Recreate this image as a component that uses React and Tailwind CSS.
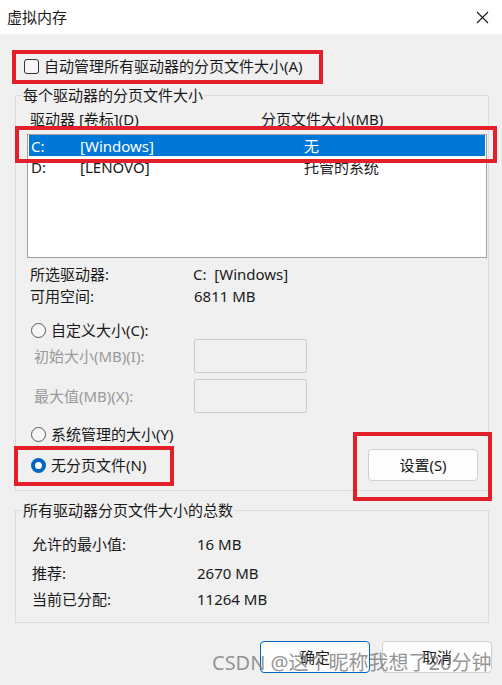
import React from 'react';

const font = "font-['Noto_Sans','Noto_Sans_CJK_SC',sans-serif]";

function Radio({ checked, label }) {
    return (
        <div className="flex items-center gap-[5px]">
            {checked ? (
                <span className="w-[15px] h-[15px] rounded-full bg-[#0067c0] flex items-center justify-center">
                    <span className="w-[7px] h-[7px] rounded-full bg-white" />
                </span>
            ) : (
                <span className="w-[15px] h-[15px] rounded-full border border-[#5a5a5a] bg-[#f7f7f7]" />
            )}
            <span>{label}</span>
        </div>
    );
}

function Button({ children, primary }) {
    return (
        <button
            className={
                primary
                    ? 'w-[110px] h-[32px] rounded-[4px] border border-[#0067c0] bg-[#fdfdfd] text-[15px] text-[#1a1a1a]'
                    : 'w-[110px] h-[32px] rounded-[4px] border border-[#d0d0d0] bg-[#fdfdfd] text-[15px] text-[#1a1a1a]'
            }
        >
            {children}
        </button>
    );
}

export default function App() {
    const drives = [
        { letter: 'C:', label: '[Windows]', size: '无', selected: true },
        { letter: 'D:', label: '[LENOVO]', size: '托管的系统', selected: false },
    ];

    const totals = [
        ['允许的最小值:', '16 MB', 'mt-[13px]'],
        ['推荐:', '2670 MB', 'mt-[7px]'],
        ['当前已分配:', '11264 MB', 'mt-[4px]'],
    ];

    return (
        <div className={`relative w-[502px] h-[685px] overflow-hidden bg-[#f0f0f0] text-[15px] leading-[20px] text-[#1a1a1a] ${font}`}>
            {/* Title bar */}
            <div className="h-[34px] bg-white flex items-center justify-between pl-[7px] pr-[13px]">
                <span>虚拟内存</span>
                <svg width="13" height="13" viewBox="0 0 13 13" stroke="#1a1a1a" strokeWidth="1.1">
                    <path d="M1 1 L12 12 M12 1 L1 12" />
                </svg>
            </div>

            {/* Auto manage checkbox */}
            <div className="mt-[22px] pl-[24px] flex items-center gap-[5px] h-[20px]">
                <span className="w-[15px] h-[15px] rounded-[3px] border border-[#333] bg-[#f7f7f7]" />
                <span>自动管理所有驱动器的分页文件大小(A)</span>
            </div>

            {/* Per drive group */}
            <fieldset className="mt-[9px] ml-[15px] w-[474px] border border-[#dcdcdc] pb-[9px]">
                <legend className="ml-[6px] px-[1px] leading-[20px]">每个驱动器的分页文件大小</legend>

                <div className="mt-[4px] h-[20px] flex pl-[14px]">
                    <span className="w-[231px]">驱动器 [卷标](D)</span>
                    <span>分页文件大小(MB)</span>
                </div>

                <div className="mt-[5px] ml-[11px] w-[460px] h-[124px] border border-[#a0a0a0] bg-white px-[1px]">
                    {drives.map((d) => (
                        <div
                            key={d.letter}
                            className={
                                d.selected
                                    ? 'h-[21px] flex items-center pl-[2px] bg-[#0078d7] text-white'
                                    : 'h-[21px] flex items-center pl-[2px]'
                            }
                        >
                            <span className="w-[49px]">{d.letter}</span>
                            <span className="w-[224px]">{d.label}</span>
                            <span>{d.size}</span>
                        </div>
                    ))}
                </div>

                <div className="mt-[5px] pl-[14px]">
                    <div className="h-[22px] flex items-center">
                        <span className="w-[163px]">所选驱动器:</span>
                        <span>C:&nbsp;&nbsp;[Windows]</span>
                    </div>
                    <div className="h-[22px] flex items-center">
                        <span className="w-[164px]">可用空间:</span>
                        <span>6811 MB</span>
                    </div>
                </div>

                <div className="mt-[14px] pl-[15px] h-[18px] flex items-center">
                    <Radio label="自定义大小(C):" />
                </div>

                <div className="h-[34px] flex items-center pl-[18px] text-[#9a9a9a]">
                    <span className="w-[160px]">初始大小(MB)(I):</span>
                    <span className="w-[113px] h-[34px] border border-[#cccccc] rounded-[2px]" />
                </div>
                <div className="mt-[6px] h-[34px] flex items-center pl-[18px] text-[#9a9a9a]">
                    <span className="w-[160px]">最大值(MB)(X):</span>
                    <span className="w-[113px] h-[34px] border border-[#cccccc] rounded-[2px]" />
                </div>

                <div className="mt-[11px] pl-[15px] h-[20px] flex items-center">
                    <Radio label="系统管理的大小(Y)" />
                </div>

                <div className="mt-[5px] pl-[15px] pr-[10px] h-[32px] flex items-center justify-between">
                    <Radio checked label="无分页文件(N)" />
                    <Button>设置(S)</Button>
                </div>
            </fieldset>

            {/* Totals group */}
            <fieldset className="mt-[9px] ml-[15px] w-[474px] border border-[#dcdcdc] pb-[12px]">
                <legend className="ml-[6px] px-[1px] leading-[20px]">所有驱动器分页文件大小的总数</legend>
                {totals.map(([label, value, gap]) => (
                    <div key={label} className={`${gap} pl-[16px] h-[22px] flex items-center`}>
                        <span className="w-[165px]">{label}</span>
                        <span>{value}</span>
                    </div>
                ))}
            </fieldset>

            <div className="mt-[18px] pr-[10px] flex justify-end gap-[12px]">
                <Button primary>确定</Button>
                <Button>取消</Button>
            </div>

            {/* Annotation boxes */}
            <div className="absolute left-[12px] top-[50px] w-[311px] h-[34px] border-4 border-[#e3202a]" />
            <div className="absolute left-[15px] top-[126px] w-[482px] h-[37px] border-4 border-[#e3202a]" />
            <div className="absolute left-[14px] top-[446px] w-[160px] h-[40px] border-4 border-[#e3202a]" />
            <div className="absolute left-[353px] top-[432px] w-[139px] h-[69px] border-4 border-[#e3202a]" />

            {/* Watermark */}
            <div className="absolute left-[212px] top-[649px] text-[20px] leading-[28px] text-[#7a7a7a]/80 whitespace-nowrap">
                CSDN @这个昵称我想了20分钟
            </div>
        </div>
    );
}
